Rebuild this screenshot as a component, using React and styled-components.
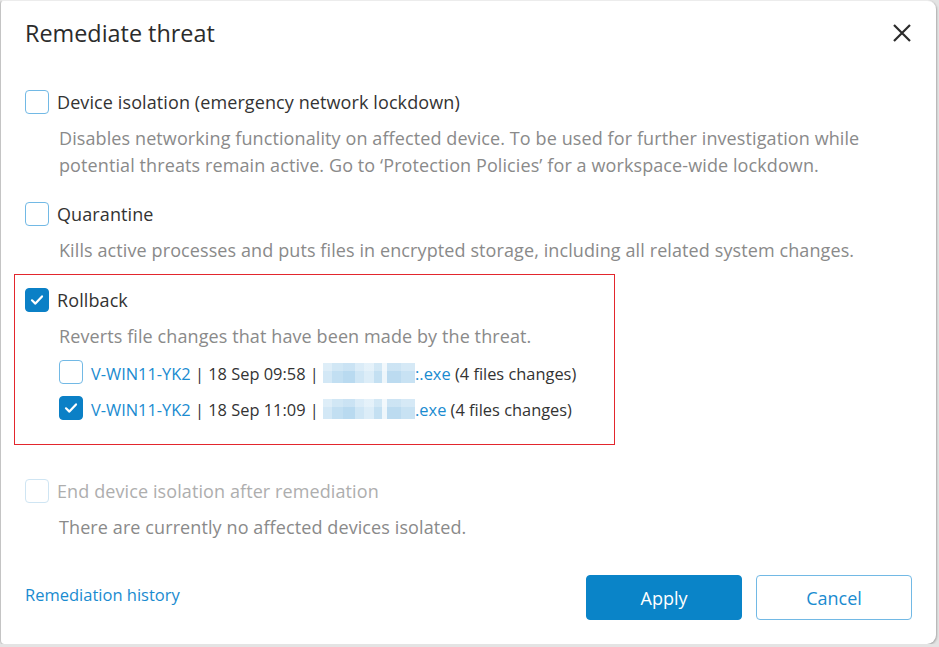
import React from 'react';
import styled, { createGlobalStyle } from 'styled-components';

const GlobalStyle = createGlobalStyle`
  html, body {
    margin: 0;
    padding: 0;
    background: #e4e4e4;
  }
  body {
    font-family: "Open Sans", "Noto Sans", sans-serif;
    color: #333;
  }
`;

const Dialog = styled.div`
  box-sizing: border-box;
  width: 936px;
  height: 644px;
  background: #fff;
  border-left: 1px solid #c4c4c4;
  border-top: 1px solid #ececec;
  border-radius: 4px 9px 9px 4px;
  box-shadow: 1px 1px 2px rgba(0, 0, 0, 0.25);
  padding: 16px 24px 0 24px;
  display: flex;
  flex-direction: column;
`;

const Header = styled.div`
  display: flex;
  align-items: center;
  justify-content: space-between;
  height: 32px;
`;

const Title = styled.h1`
  margin: 0;
  font-size: 23.4px;
  font-weight: 400;
  color: #2b2b2b;
`;

const CloseButton = styled.button`
  border: none;
  background: none;
  padding: 0;
  width: 20px;
  height: 20px;
  display: flex;
  cursor: pointer;
`;

const Options = styled.div`
  display: flex;
  flex-direction: column;
  margin-top: 41px;
`;

const Option = styled.div`
  display: flex;
  flex-direction: column;
  margin-bottom: ${p => p.$gap ?? 23}px;
`;

const Highlight = styled.div`
  box-sizing: border-box;
  width: 601px;
  margin: -14px 0 0 -11px;
  padding: 13px 0 22px 10px;
  border: 1.5px solid #e3262d;
  margin-bottom: 34px;
`;

const Row = styled.label`
  display: flex;
  align-items: center;
  gap: 8px;
  font-size: 18px;
  line-height: 24px;
  color: ${p => (p.$disabled ? '#aeaeae' : '#333')};
  letter-spacing: 0.1px;
  white-space: nowrap;
`;

const Box = styled.span`
  box-sizing: border-box;
  flex: none;
  width: 24px;
  height: 24px;
  border-radius: 4px;
  border: 1.5px solid ${p => (p.$disabled ? '#cfe5f3' : p.$checked ? '#0b80c6' : '#72b9e5')};
  background: ${p => (p.$checked ? '#0b80c6' : '#fff')};
  display: flex;
  align-items: center;
  justify-content: center;
`;

const Desc = styled.p`
  margin: 11px 0 0 34px;
  font-size: 18px;
  line-height: 27px;
  color: #8a8a8a;
  letter-spacing: 0.1px;
`;

const SubList = styled.div`
  display: flex;
  flex-direction: column;
  gap: 10px;
  margin: 10px 0 0 34px;
`;

const SubRow = styled(Row)`
  align-items: flex-start;
  font-size: 16.4px;
  letter-spacing: 0;
  span:last-child {
    margin-top: 2px;
  }
`;

const LinkText = styled.span`
  color: #1a8bd0;
`;

const Blur = styled.span`
  display: inline-block;
  vertical-align: -3px;
  width: 92px;
  height: 20px;
  background:
    linear-gradient(180deg, rgba(255,255,255,0.25) 0 40%, rgba(255,255,255,0) 40% 100%),
    linear-gradient(90deg,
      #d3e8f6 0 10%, #c2dff2 10% 22%, #b9daf0 22% 35%, #cfe6f5 35% 45%,
      #dcedf8 45% 55%, #c4e0f2 55% 64%, #eef6fb 64% 70%, #bcdbf0 70% 85%, #c8e2f3 85% 100%);
`;

const Footer = styled.div`
  margin-top: auto;
  margin-bottom: 24px;
  display: flex;
  align-items: center;
  justify-content: space-between;
`;

const HistoryLink = styled.a`
  font-size: 16.5px;
  color: #1a8bd0;
  text-decoration: none;
  padding-bottom: 6px;
  cursor: pointer;
`;

const Buttons = styled.div`
  display: flex;
  gap: 14px;
`;

const Button = styled.button`
  box-sizing: border-box;
  width: 156px;
  height: 45px;
  border-radius: 4px;
  font-family: inherit;
  font-size: 18px;
  cursor: pointer;
  border: 1.5px solid ${p => (p.$primary ? '#0a84c8' : '#72b9e5')};
  background: ${p => (p.$primary ? '#0a84c8' : '#fff')};
  color: ${p => (p.$primary ? '#fff' : '#1a8bd0')};
`;

const Check = () => (
  <svg width="14" height="12" viewBox="0 0 14 12">
    <path d="M2 6.3l3.4 3.3L12 2.4" fill="none" stroke="#fff" strokeWidth="2.2" strokeLinecap="round" strokeLinejoin="round" />
  </svg>
);

const Checkbox = ({ checked, disabled }) => (
  <Box $checked={checked} $disabled={disabled}>{checked && <Check />}</Box>
);

const rollbackItems = [
  { checked: false, time: '18 Sep 09:58', sep: ':' },
  { checked: true, time: '18 Sep 11:09', sep: '' },
];

export default function App() {
  return (
    <>
      <GlobalStyle />
      <Dialog>
        <Header>
          <Title>Remediate threat</Title>
          <CloseButton aria-label="Close">
            <svg width="20" height="20" viewBox="0 0 20 20">
              <path d="M2 2l16 16M18 2L2 18" stroke="#2b2b2b" strokeWidth="2.2" />
            </svg>
          </CloseButton>
        </Header>

        <Options>
          <Option>
            <Row>
              <Checkbox />
              Device isolation (emergency network lockdown)
            </Row>
            <Desc>
              Disables networking functionality on affected device. To be used for further investigation while
              <br />
              potential threats remain active. Go to ‘Protection Policies’ for a workspace-wide lockdown.
            </Desc>
          </Option>

          <Option $gap={24}>
            <Row>
              <Checkbox />
              Quarantine
            </Row>
            <Desc>Kills active processes and puts files in encrypted storage, including all related system changes.</Desc>
          </Option>

          <Highlight>
            <Row>
              <Checkbox checked />
              Rollback
            </Row>
            <Desc>Reverts file changes that have been made by the threat.</Desc>
            <SubList>
              {rollbackItems.map((item, i) => (
                <SubRow key={i}>
                  <Checkbox checked={item.checked} />
                  <span>
                    <LinkText>V-WIN11-YK2</LinkText> | {item.time} | <Blur />
                    <LinkText>{item.sep}.exe</LinkText> (4 files changes)
                  </span>
                </SubRow>
              ))}
            </SubList>
          </Highlight>

          <Option $gap={0}>
            <Row $disabled>
              <Checkbox disabled />
              End device isolation after remediation
            </Row>
            <Desc>There are currently no affected devices isolated.</Desc>
          </Option>
        </Options>

        <Footer>
          <HistoryLink>Remediation history</HistoryLink>
          <Buttons>
            <Button $primary>Apply</Button>
            <Button>Cancel</Button>
          </Buttons>
        </Footer>
      </Dialog>
    </>
  );
}
